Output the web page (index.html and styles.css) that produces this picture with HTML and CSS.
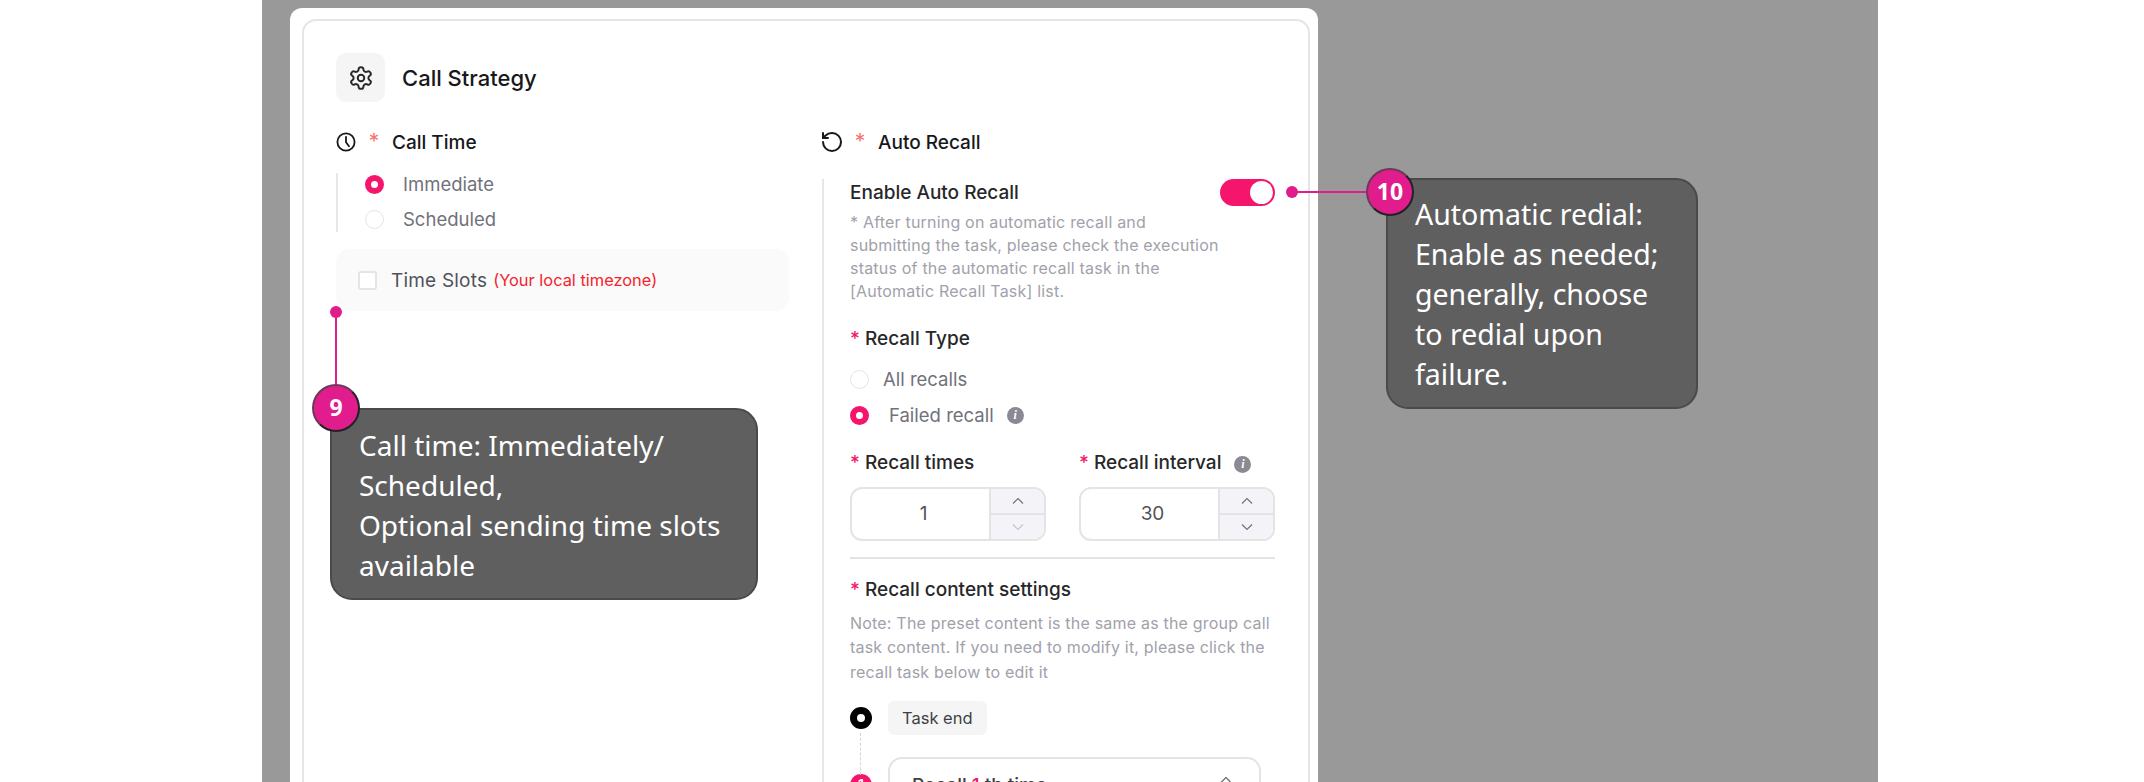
FILE: index.html
```html
<!DOCTYPE html>
<html>
  <head>
    <title>Call Strategy</title>
    <meta name="viewport" content="width=device-width, initial-scale=1">
    <link rel="stylesheet" href="styles.css">
  </head>
  <body>
    <div class="backdrop">
      <div class="sheet">
        <div class="panel">
          <div class="panel-head">
            <div class="head-icon">
              <svg width="26" height="26" viewBox="0 0 24 24" fill="none" stroke="#27272a" stroke-width="1.8" stroke-linejoin="round"><path d="M12.22 2h-.44a2 2 0 0 0-2 2v.18a2 2 0 0 1-1 1.73l-.43.25a2 2 0 0 1-2 0l-.15-.08a2 2 0 0 0-2.73.73l-.22.38a2 2 0 0 0 .73 2.73l.15.1a2 2 0 0 1 1 1.72v.51a2 2 0 0 1-1 1.74l-.15.09a2 2 0 0 0-.73 2.73l.22.38a2 2 0 0 0 2.73.73l.15-.08a2 2 0 0 1 2 0l.43.25a2 2 0 0 1 1 1.73V20a2 2 0 0 0 2 2h.44a2 2 0 0 0 2-2v-.18a2 2 0 0 1 1-1.73l.43-.25a2 2 0 0 1 2 0l.15.08a2 2 0 0 0 2.73-.73l.22-.39a2 2 0 0 0-.73-2.73l-.15-.08a2 2 0 0 1-1-1.74v-.5a2 2 0 0 1 1-1.74l.15-.09a2 2 0 0 0 .73-2.73l-.22-.38a2 2 0 0 0-2.73-.73l-.15.08a2 2 0 0 1-2 0l-.43-.25a2 2 0 0 1-1-1.73V4a2 2 0 0 0-2-2z"/><circle cx="12" cy="12" r="3"/></svg>
            </div>
            <div class="panel-title">Call Strategy</div>
          </div>
          <div class="cols">
            <div class="col-left">
              <div class="sec-head">
                <svg width="20" height="20" viewBox="0 0 20 20" fill="none" stroke="#18181b" stroke-width="1.8" stroke-linecap="round"><circle cx="10" cy="10" r="8.6"/><path d="M10 4.8v5.4l3 4"/></svg>
                <span class="req soft">*</span>
                <span class="sec-name">Call Time</span>
              </div>
              <div class="options">
                <div class="opt"><span class="radio on"></span>Immediate</div>
                <div class="opt"><span class="radio"></span>Scheduled</div>
              </div>
              <div class="slots">
                <span class="check"></span>
                <span class="slots-name">Time Slots</span>
                <span class="slots-note">(Your local timezone)</span>
              </div>
            </div>
            <div class="col-right">
              <div class="sec-head">
                <svg width="20" height="20" viewBox="2 2 20 20" fill="none" stroke="#18181b" stroke-width="2" stroke-linecap="round" stroke-linejoin="round"><path d="M3 12a9 9 0 1 0 9-9 9.75 9.75 0 0 0-6.740 2.740L3 8"/><path d="M3 3v5h5"/></svg>
                <span class="req soft">*</span>
                <span class="sec-name">Auto Recall</span>
              </div>
              <div class="recall">
                <div class="enable-row">
                  <span class="label">Enable Auto Recall</span>
                  <span class="toggle"><span class="knob"></span></span>
                </div>
                <p class="hint hint-enable">* After turning on automatic recall and submitting the task, please check the execution status of the automatic recall task in the [Automatic Recall Task] list.</p>
                <div class="label type-label"><span class="req">*</span> Recall Type</div>
                <div class="type-options">
                  <div class="opt"><span class="radio"></span>All recalls</div>
                  <div class="opt failed"><span class="radio on"></span>Failed recall<span class="info">i</span></div>
                </div>
                <div class="fields">
                  <div class="field">
                    <div class="label"><span class="req">*</span> Recall times</div>
                    <div class="number">
                      <div class="number-val">1</div>
                      <div class="steppers">
                        <div class="step"><svg width="12" height="8" viewBox="0 0 12 8" fill="none" stroke="#71717a" stroke-width="1.2"><path d="M1 6.500l5-5 5 5"/></svg></div>
                        <div class="step"><svg width="12" height="8" viewBox="0 0 12 8" fill="none" stroke="#c4c4cc" stroke-width="1.2"><path d="M1 1.500l5 5 5-5"/></svg></div>
                      </div>
                    </div>
                  </div>
                  <div class="field">
                    <div class="label"><span class="req">*</span> Recall interval<span class="info">i</span></div>
                    <div class="number">
                      <div class="number-val">30</div>
                      <div class="steppers">
                        <div class="step"><svg width="12" height="8" viewBox="0 0 12 8" fill="none" stroke="#71717a" stroke-width="1.2"><path d="M1 6.500l5-5 5 5"/></svg></div>
                        <div class="step"><svg width="12" height="8" viewBox="0 0 12 8" fill="none" stroke="#71717a" stroke-width="1.2"><path d="M1 1.500l5 5 5-5"/></svg></div>
                      </div>
                    </div>
                  </div>
                </div>
                <div class="divider"></div>
                <div class="label"><span class="req">*</span> Recall content settings</div>
                <p class="hint hint-content">Note: The preset content is the same as the group call task content. If you need to modify it, please click the recall task below to edit it</p>
                <div class="timeline">
                  <div class="tl-row">
                    <span class="tl-dot"></span>
                    <span class="tl-tag">Task end</span>
                  </div>
                  <div class="tl-row tl-row-card">
                    <div class="tl-rail"><span class="tl-dash"></span><span class="tl-num">1</span></div>
                    <div class="tl-card">
                      <span class="tl-card-name">Recall <b>1</b> th time</span>
                      <svg class="tl-edit" width="18" height="18" viewBox="0 0 18 18" fill="none" stroke="#71717a" stroke-width="1.3" stroke-linejoin="round"><path d="M11 2.500l4 4-8.500 8.500H2.500v-4z"/></svg>
                    </div>
                  </div>
                </div>
              </div>
            </div>
          </div>
        </div>
      </div>
    </div>

    <span class="pin pin-nine"></span>
    <span class="stem stem-nine"></span>
    <div class="note note-nine">Call time: Immediately/<br>Scheduled,<br>Optional sending time slots<br>available</div>
    <span class="badge badge-nine">9</span>

    <span class="pin pin-ten"></span>
    <span class="stem stem-ten"></span>
    <div class="note note-ten">Automatic redial:<br>Enable as needed;<br>generally, choose<br>to redial upon<br>failure.</div>
    <span class="badge badge-ten">10</span>
  </body>
</html>
```

FILE: styles.css
```css
* { box-sizing: border-box; }

html, body {
  margin: 0;
  height: 782px;
  overflow: hidden;
  background: #fff;
}

body {
  position: relative;
  font-family: Inter, "Liberation Sans", sans-serif;
  padding-left: 262px;
}

.backdrop {
  width: 1616px;
  height: 782px;
  background: #999;
  padding: 8px 0 0 28px;
  overflow: hidden;
}

.sheet {
  width: 1028px;
  height: 800px;
  background: #fff;
  border-radius: 12px 12px 0 0;
  padding: 11px 8px 0 12px;
}

.panel {
  height: 800px;
  border: 2px solid #e5e5e5;
  border-radius: 14px;
  padding: 32px 0 0 32px;
}

.panel-head {
  display: flex;
  align-items: center;
  gap: 17px;
  height: 49px;
}

.head-icon {
  width: 49px;
  height: 49px;
  border-radius: 10px;
  background: #f5f5f5;
  display: flex;
  align-items: center;
  justify-content: center;
}

.panel-title {
  font-size: 22px;
  font-weight: 500;
  color: #18181b;
}

.cols {
  display: flex;
  margin-top: 27px;
}

.col-left { width: 486px; flex: none; }
.col-right { width: 454px; flex: none; }

.sec-head {
  display: flex;
  align-items: center;
  height: 26px;
}

.sec-name {
  font-size: 19px;
  font-weight: 500;
  color: #18181b;
}

.req { color: #f5156c; }
.req.soft {
  color: #f87171;
  font-size: 21px;
  width: 14px;
  text-align: center;
  margin: 0 11px 0 11px;
  line-height: 26px;
}

.options {
  margin-top: 18px;
  height: 59px;
  border-left: 2px solid #e5e7eb;
  padding-left: 27px;
  display: flex;
  flex-direction: column;
  gap: 13px;
}

.opt {
  display: flex;
  align-items: center;
  font-size: 18.500px;
  line-height: 22px;
  color: #71717a;
}

.radio {
  width: 19px;
  height: 19px;
  border-radius: 50%;
  border: 1.5px solid #e4e4e7;
  background: #fff;
  margin-right: 19px;
  flex: none;
}

.radio.on {
  border: 6px solid #f5156c;
}

.slots {
  margin-top: 17px;
  width: 453px;
  height: 62px;
  background: #fafafa;
  border-radius: 14px;
  padding-left: 22px;
  display: flex;
  align-items: center;
}

.check {
  width: 19px;
  height: 19px;
  border: 2px solid #e4e4e7;
  border-radius: 3px;
  background: #fff;
  margin-right: 14px;
}

.slots-name {
  font-size: 19px;
  letter-spacing: .2px;
  color: #52525b;
  margin-right: 6px;
}

.slots-note {
  font-size: 16.400px;
  color: #f5222d;
}

.recall {
  margin-top: 24px;
  border-left: 2px solid #e5e7eb;
  padding-left: 26px;
  height: 640px;
}

.label {
  font-size: 19px;
  font-weight: 500;
  color: #27272a;
  line-height: 22px;
}

.enable-row {
  display: flex;
  justify-content: space-between;
  align-items: center;
  width: 425px;
  height: 27px;
}

.toggle {
  width: 55px;
  height: 27px;
  border-radius: 14px;
  background: #f5156c;
  padding: 2px;
  display: flex;
  justify-content: flex-end;
}

.knob {
  width: 23px;
  height: 23px;
  border-radius: 50%;
  background: #fff;
}

.hint {
  margin: 0;
  font-size: 16px;
  letter-spacing: .2px;
  line-height: 23px;
  color: #a1a1aa;
}

.hint-enable { width: 376px; margin-top: 5px; }

.type-label { margin-top: 25px; }

.type-options {
  margin-top: 18px;
  display: flex;
  flex-direction: column;
  gap: 14px;
}

.type-options .radio { margin-right: 14px; }
.type-options .failed .radio { margin-right: 20px; }

.info {
  width: 17px;
  height: 17px;
  border-radius: 50%;
  background: #8a8a94;
  color: #fff;
  font: italic bold 12px/17px "Liberation Serif", serif;
  text-align: center;
  margin-left: 13px;
  display: inline-block;
  vertical-align: 1px;
}

.fields {
  display: flex;
  gap: 33px;
  margin-top: 26px;
}

.field { width: 196px; }

.number {
  display: flex;
  height: 54px;
  margin-top: 13px;
  border: 2px solid #e4e4e7;
  border-radius: 12px;
  overflow: hidden;
}

.number-val {
  flex: 1;
  text-align: center;
  padding-left: 6px;
  line-height: 50px;
  font-size: 19px;
  color: #52525b;
}

.steppers {
  width: 55px;
  background: #f4f4f8;
  border-left: 2px solid #e4e4e7;
  display: flex;
  flex-direction: column;
}

.step {
  flex: 1;
  display: flex;
  align-items: center;
  justify-content: center;
}

.step + .step { border-top: 2px solid #e4e4e7; }

.divider {
  width: 425px;
  height: 2px;
  background: #e4e4e7;
  margin: 16px 0 20px;
}

.hint-content { width: 425px; margin-top: 10px; line-height: 24.300px; }

.timeline { margin-top: 17px; }

.tl-row {
  display: flex;
  align-items: center;
  gap: 16px;
}

.tl-dot {
  width: 22px;
  height: 22px;
  border-radius: 50%;
  border: 7px solid #000;
  background: #fff;
  flex: none;
}

.tl-tag {
  height: 34px;
  line-height: 34px;
  padding: 0 14px;
  background: #f5f5f5;
  border-radius: 6px;
  font-size: 16.500px;
  color: #3f3f46;
}

.tl-row-card {
  align-items: flex-start;
  margin-top: 22px;
}

.tl-rail {
  width: 22px;
  flex: none;
  position: relative;
  padding-top: 17px;
}

.tl-dash {
  position: absolute;
  left: 10px;
  top: -24px;
  height: 42px;
  border-left: 1.500px dashed #d4d4d8;
}

.tl-num {
  display: block;
  width: 22px;
  height: 22px;
  border-radius: 50%;
  background: #f5156c;
  color: #fff;
  font-size: 14px;
  font-weight: 600;
  line-height: 22px;
  text-align: center;
}

.tl-card {
  width: 373px;
  height: 80px;
  border: 2px solid #e4e4e7;
  border-radius: 14px;
  padding: 15px 26px 0 22px;
  display: flex;
  justify-content: space-between;
  font-size: 19px;
  font-weight: 500;
  color: #3f3f46;
}

.tl-edit { margin-top: 1px; }

.tl-card-name b { color: #f5156c; font-weight: 500; }

/* callouts over the page */
.pin {
  position: absolute;
  width: 12px;
  height: 12px;
  border-radius: 50%;
  background: #e11d8d;
}

.stem {
  position: absolute;
  background: #e11d8d;
}

.pin-nine { left: 330px; top: 306px; }
.stem-nine { left: 335px; top: 312px; width: 2px; height: 75px; }
.pin-ten { left: 1286px; top: 186px; }
.stem-ten { left: 1292px; top: 191px; width: 75px; height: 2px; }

.note {
  position: absolute;
  background: #5f5f5f;
  border: 2px solid #4a4a4a;
  border-radius: 22px;
  color: #fff;
  font-family: "Noto Sans", "Open Sans", sans-serif;
  line-height: 40px;
  white-space: nowrap;
}

.note-nine {
  left: 330px;
  top: 408px;
  width: 428px;
  height: 192px;
  padding: 15px 0 0 27px;
  font-size: 28px;
}

.note-ten {
  left: 1386px;
  top: 178px;
  width: 312px;
  height: 231px;
  padding: 14px 0 0 27px;
  font-size: 28.500px;
}

.badge {
  position: absolute;
  width: 48px;
  height: 48px;
  border-radius: 50%;
  background: #e11d8d;
  border: 2px solid #222;
  border-top-color: #6a3a58;
  border-left-color: #6a3a58;
  color: #fff;
  font-family: "Noto Sans", sans-serif;
  font-weight: 700;
  font-size: 23px;
  line-height: 43px;
  text-align: center;
}

.badge-nine { left: 312px; top: 384px; }
.badge-ten { left: 1366px; top: 168px; }
```
